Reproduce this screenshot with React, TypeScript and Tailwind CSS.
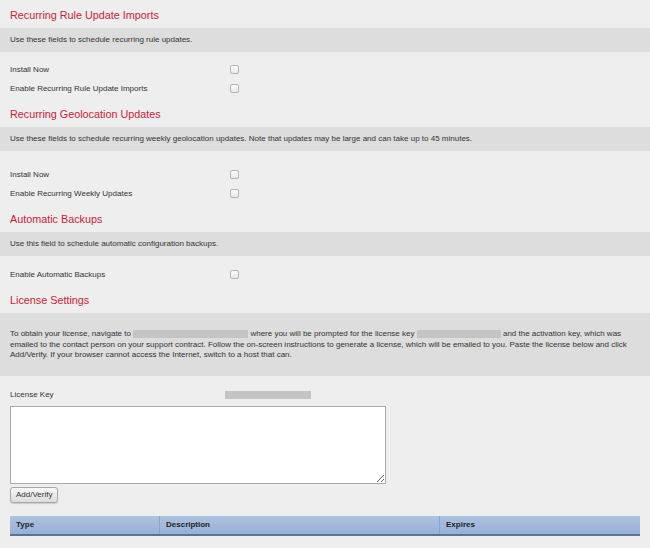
import React from "react";

const font = { fontFamily: '"Liberation Sans", Arial, sans-serif' };

function Heading({ first, children }: { first?: boolean; children: React.ReactNode }) {
    return (
        <h2 className={`text-[10.8px] leading-[13px] text-[#cc1a3a] px-[10px] pb-[6px] ${first ? "pt-[9px]" : "pt-[10px]"}`}>
            {children}
        </h2>
    );
}

function Band({ children }: { children: React.ReactNode }) {
    return <div className="bg-[#dddddd] px-[10px] py-[8px] text-[8px] leading-[8px] text-[#333]">{children}</div>;
}

function CheckRow({ label }: { label: string }) {
    return (
        <div className="flex items-center h-[19px] px-[10px] text-[8px] text-[#333]">
            <span className="w-[220px]">{label}</span>
            <span className="w-[9px] h-[9px] rounded-[2px] border border-[#b4b4b4] bg-gradient-to-b from-[#fdfdfd] to-[#e8e8e8]" />
        </div>
    );
}

function Blank({ w }: { w: string }) {
    return <span className={`inline-block align-middle h-[8px] bg-[#c4c4c4] ${w}`} />;
}

export default function App() {
    return (
        <div style={font} className="w-[650px] h-[548px] bg-[#eeeeee] overflow-hidden">
            <Heading first>Recurring Rule Update Imports</Heading>
            <Band>Use these fields to schedule recurring rule updates.</Band>
            <div className="pt-[8px]">
                <CheckRow label="Install Now" />
                <CheckRow label="Enable Recurring Rule Update Imports" />
            </div>

            <Heading>Recurring Geolocation Updates</Heading>
            <Band>Use these fields to schedule recurring weekly geolocation updates. Note that updates may be large and can take up to 45 minutes.</Band>
            <div className="pt-[14px]">
                <CheckRow label="Install Now" />
                <CheckRow label="Enable Recurring Weekly Updates" />
            </div>

            <Heading>Automatic Backups</Heading>
            <Band>Use this field to schedule automatic configuration backups.</Band>
            <div className="pt-[9px]">
                <CheckRow label="Enable Automatic Backups" />
            </div>

            <Heading>License Settings</Heading>
            <div className="bg-[#dddddd] px-[10px] pt-[16px] pb-[15px] text-[8px] leading-[10.5px] text-[#333]">
                To obtain your license, navigate to <Blank w="w-[115px]" /> where you will be prompted for the license key <Blank w="w-[84px]" /> and the activation key, which was
                <br />
                emailed to the contact person on your support contract. Follow the on-screen instructions to generate a license, which will be emailed to you. Paste the license below and click
                <br />
                Add/Verify. If your browser cannot access the Internet, switch to a host that can.
            </div>

            <div className="px-[10px] pt-[14px]">
                <div className="flex items-center h-[10px] text-[8px] text-[#333]">
                    <span className="w-[215px]">License Key</span>
                    <span className="w-[86px] h-[8px] bg-[#c4c4c4]" />
                </div>
                <textarea className="block mt-[6px] w-[376px] h-[78px] bg-white border border-[#aaaaaa] resize" />
                <button className="block mt-[3px] h-[16px] px-[5px] text-[8px] text-[#333] border border-[#a8a8a8] rounded-[3px] bg-gradient-to-b from-[#f8f8f8] to-[#dcdcdc] shadow-[0_1px_1px_rgba(0,0,0,0.15)]">
                    Add/Verify
                </button>
                <div className="mt-[13px] grid grid-cols-[150px_280px_1fr] h-[20px] bg-gradient-to-b from-[#adc2e0] to-[#97b0d6] border-b-2 border-[#5e7394] text-[8px] font-bold text-[#222]">
                    <div className="flex items-center px-[6px] border-r border-[#8aa3c8]">Type</div>
                    <div className="flex items-center px-[6px] border-r border-[#8aa3c8]">Description</div>
                    <div className="flex items-center px-[6px]">Expires</div>
                </div>
            </div>
        </div>
    );
}
